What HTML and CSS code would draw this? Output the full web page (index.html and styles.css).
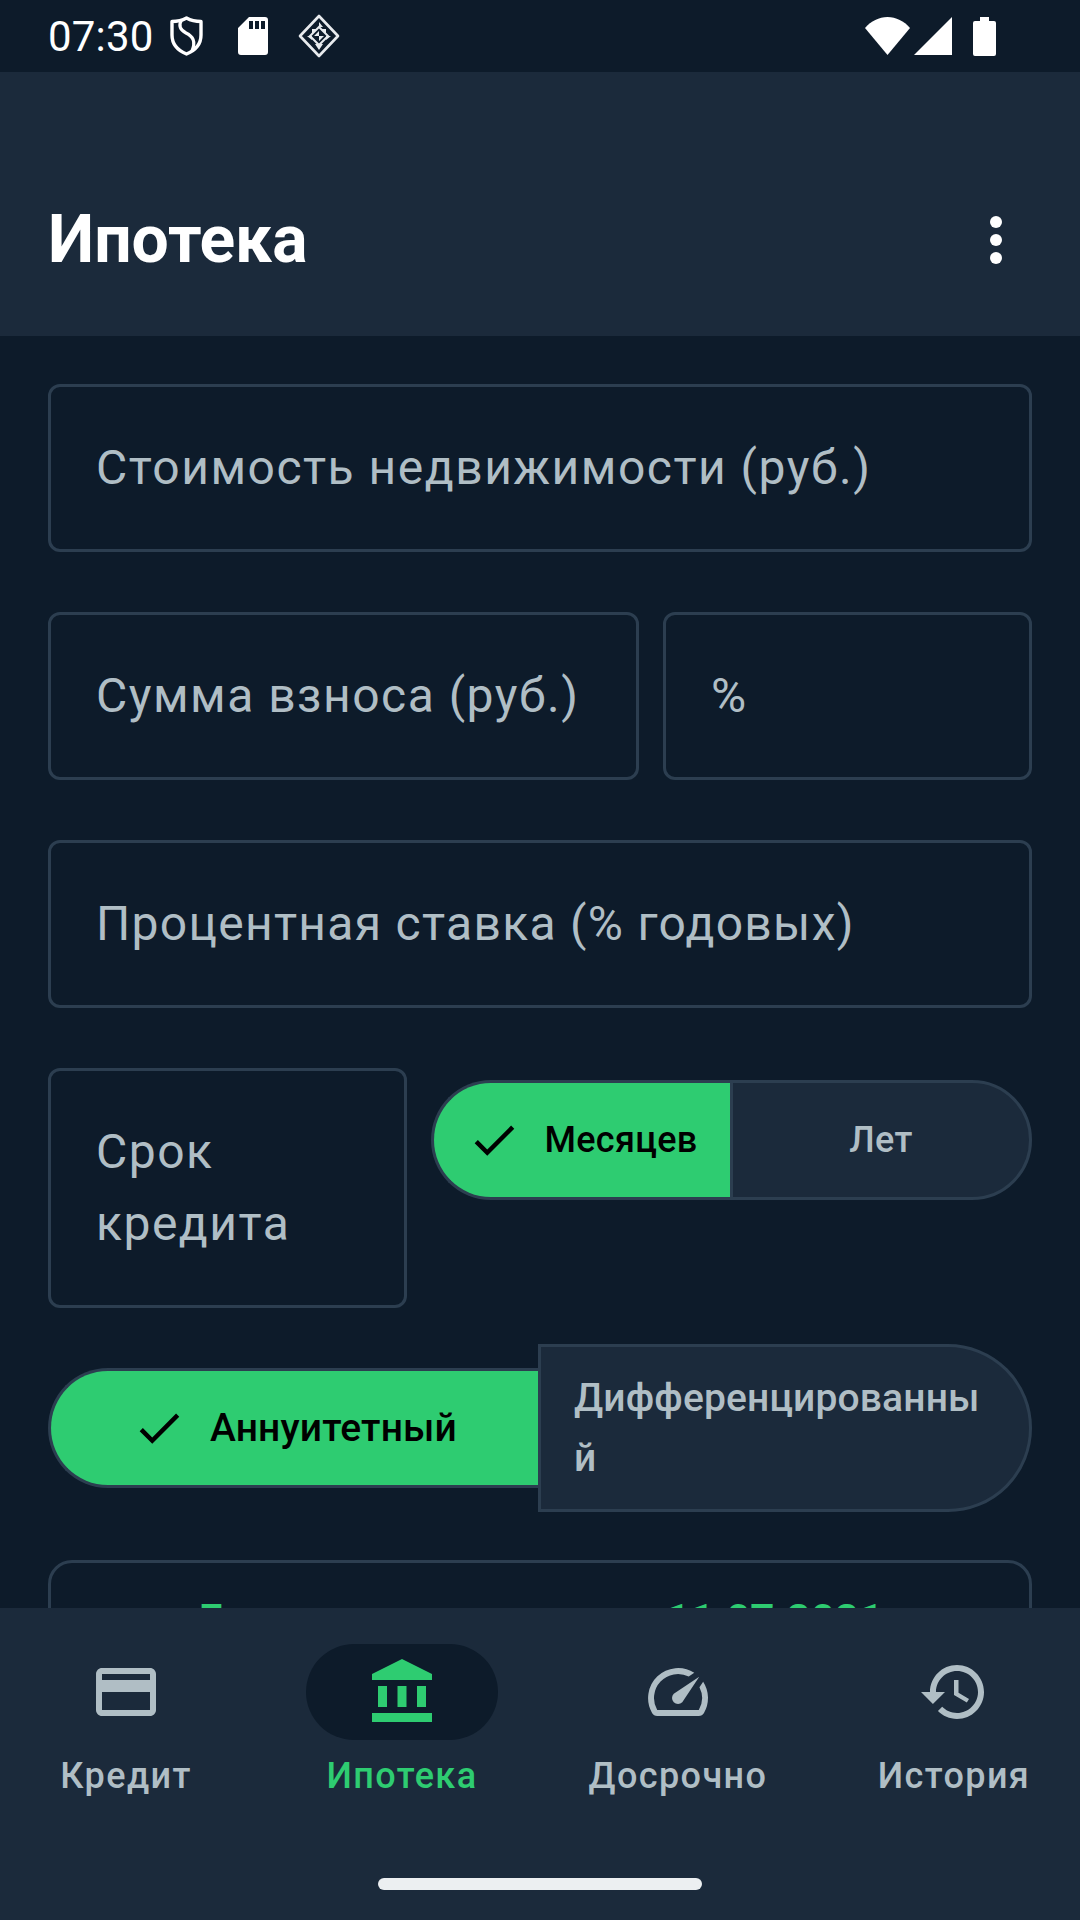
FILE: index.html
```html
<!DOCTYPE html>
<html>
<head>
    <meta charset="UTF-8">
    <meta name="viewport" content="width=device-width, initial-scale=1.0">
    <title>Ипотека</title>
    <link rel="stylesheet" href="styles.css">
</head>
<body>
    <!-- Status bar -->
    <div class="status-bar">
        <span class="clock">07:30</span>
        <svg class="ic-shield" width="33" height="40" viewBox="0 0 33 40">
            <path d="M16.5 2 C21 4.500 26 5.500 31 5.500 V19 C31 28 25 34.500 16.5 38 C8 34.500 2 28 2 19 V5.500 C7 5.500 12 4.500 16.500 2 Z" fill="none" stroke="#fff" stroke-width="3.400" stroke-linejoin="round"/>
            <path d="M11.500 4 C8 10 10.500 14 16 17 C23 20.500 26 25 22 35" fill="none" stroke="#fff" stroke-width="3.200"/>
        </svg>
        <svg class="ic-sd" width="30" height="38" viewBox="0 0 30 38">
            <path fill="#fff" d="M11 0 H27 A3 3 0 0 1 30 3 V35 A3 3 0 0 1 27 38 H3 A3 3 0 0 1 0 35 V11 Z M11 4 V12 H15 V4 Z M17 4 V12 H21 V4 Z M23 4 V12 H27 V4 Z" fill-rule="evenodd"/>
        </svg>
        <svg class="ic-diamond" width="42" height="44" viewBox="0 0 42 44">
            <path d="M21 2 L40 22 L21 42 L2 22 Z" fill="none" stroke="#e8ebee" stroke-width="2.600" stroke-linejoin="round"/>
            <path d="M21 13 L30 22 L21 31 L12 22 Z" fill="none" stroke="#e8ebee" stroke-width="2"/>
            <path fill="#e8ebee" d="M21 8 L25 13 H21 Z M14 15 H19 L14 20 Z M28 15 V20 L23 15 Z M9 22 H14 L14 26 Z M33 22 H28 V26 Z M21 22 H26 L21 27 Z M16 22 H21 V17 Z M17 30 H25 L21 36 Z"/>
        </svg>
        <span class="spacer"></span>
        <svg class="ic-wifi" width="45" height="38" viewBox="0 0 45 38">
            <path fill="#fff" d="M22.500 38 L0 11 C6 4 14 0 22.500 0 C31 0 39 4 45 11 Z"/>
        </svg>
        <svg class="ic-signal" width="38" height="38" viewBox="0 0 38 38">
            <path fill="#fff" d="M38 0 V38 H0 Z"/>
        </svg>
        <svg class="ic-battery" width="23" height="39" viewBox="0 0 23 39">
            <path fill="#fff" d="M7 0 H16 V4 H21 A2 2 0 0 1 23 6 V37 A2 2 0 0 1 21 39 H2 A2 2 0 0 1 0 37 V6 A2 2 0 0 1 2 4 H7 Z"/>
        </svg>
    </div>

    <!-- App bar -->
    <div class="app-bar">
        <h1>Ипотека</h1>
        <div class="more">
            <i></i><i></i><i></i>
        </div>
    </div>

    <!-- Form -->
    <div class="content">
        <div class="field">Стоимость недвижимости (руб.)</div>
        <div class="row">
            <div class="field grow">Сумма взноса (руб.)</div>
            <div class="field percent">%</div>
        </div>
        <div class="field tight">Процентная ставка (% годовых)</div>
        <div class="row top">
            <div class="field term">Срок кредита</div>
            <div class="toggle small">
                <div class="seg on">
                    <svg width="54" height="54" viewBox="0 0 24 24"><path d="M9 16.170 4.830 12l-1.420 1.410L9 19 21 7l-1.410-1.410z" fill="#000"/></svg>
                    <span>Месяцев</span>
                </div>
                <div class="seg off">Лет</div>
            </div>
        </div>
        <div class="toggle wide">
            <div class="seg on">
                <svg width="54" height="54" viewBox="0 0 24 24"><path d="M9 16.170 4.830 12l-1.420 1.410L9 19 21 7l-1.410-1.410z" fill="#000"/></svg>
                <span>Аннуитетный</span>
            </div>
            <div class="seg off">Дифференцированный</div>
        </div>
        <div class="card">
            <span>Гашение</span>
            <span>11.07.2021</span>
        </div>
    </div>

    <!-- Bottom navigation -->
    <div class="nav">
        <div class="nav-items">
            <div class="nav-item">
                <div class="nav-icon">
                    <svg width="72" height="72" viewBox="0 0 24 24"><path d="M20 4H4c-1.110 0-1.990.890-1.990 2L2 18c0 1.110.890 2 2 2h16c1.110 0 2-.890 2-2V6c0-1.110-.890-2-2-2zm0 14H4v-6h16v6zm0-10H4V6h16v2z"/></svg>
                </div>
                <span>Кредит</span>
            </div>
            <div class="nav-item active">
                <div class="nav-icon">
                    <svg width="72" height="72" viewBox="0 0 24 24"><path d="M4 10h3v7H4zm6.500 0h3v7h-3zM2 19h20v3H2zm15-9h3v7h-3zm-5-9L2 6v2h20V6z"/></svg>
                </div>
                <span>Ипотека</span>
            </div>
            <div class="nav-item">
                <div class="nav-icon">
                    <svg width="72" height="72" viewBox="0 0 24 24"><path d="M20.380 8.570l-1.230 1.850a8 8 0 0 1-.220 7.580H5.070A8 8 0 0 1 15.580 6.850l1.850-1.230A10 10 0 0 0 3.350 19a2 2 0 0 0 1.720 1h13.850a2 2 0 0 0 1.740-1 10 10 0 0 0-.270-10.440zm-9.790 6.840a2 2 0 0 0 2.830 0l5.660-8.490-8.490 5.660a2 2 0 0 0 0 2.830z"/></svg>
                </div>
                <span>Досрочно</span>
            </div>
            <div class="nav-item">
                <div class="nav-icon">
                    <svg width="72" height="72" viewBox="0 0 24 24"><path d="M13 3c-4.970 0-9 4.030-9 9H1l3.890 3.890.070.140L9 12H6c0-3.870 3.130-7 7-7s7 3.130 7 7-3.130 7-7 7c-1.930 0-3.680-.790-4.940-2.060l-1.420 1.420C8.270 19.990 10.510 21 13 21c4.970 0 9-4.030 9-9s-4.030-9-9-9zm-1 5v5l4.280 2.540.720-1.210-3.500-2.080V8H12z"/></svg>
                </div>
                <span>История</span>
            </div>
        </div>
        <div class="home-bar"></div>
    </div>
</body>
</html>
```

FILE: styles.css
```css
* {
    box-sizing: border-box;
}
html, body {
    margin: 0;
    padding: 0;
}
body {
    width: 1080px;
    height: 1920px;
    overflow: hidden;
    display: flex;
    flex-direction: column;
    background-color: #0d1b2a;
    font-family: Roboto, sans-serif;
    color: #b0bec5;
}

/* status bar */
.status-bar {
    height: 72px;
    flex: none;
    display: flex;
    align-items: center;
    padding: 0 84px 0 48px;
}
.clock {
    font-size: 42px;
    color: #fff;
    width: 122px;
    letter-spacing: 0.200px;
}
.ic-sd {
    margin-left: 35px;
}
.ic-diamond {
    margin-left: 30px;
}
.spacer {
    flex: 1;
}
.ic-signal {
    margin-left: 4px;
}
.ic-battery {
    margin-left: 21px;
}

/* app bar */
.app-bar {
    height: 264px;
    flex: none;
    display: flex;
    align-items: center;
    justify-content: space-between;
    padding: 126px 78px 54px 48px;
    background-color: #1b2a3b;
}
.app-bar h1 {
    margin: 0;
    font-size: 66px;
    line-height: 84px;
    font-weight: 700;
    color: #fff;
}
.more {
    display: flex;
    flex-direction: column;
    gap: 6px;
}
.more i {
    width: 12px;
    height: 12px;
    border-radius: 50%;
    background-color: #fff;
}

/* form */
.content {
    flex: 1;
    min-height: 0;
    overflow: hidden;
    display: flex;
    flex-direction: column;
    gap: 60px;
    padding: 48px 48px 0;
}
.field {
    flex: none;
    min-height: 168px;
    display: flex;
    align-items: center;
    padding: 0 45px;
    border: 3px solid #2c3e50;
    border-radius: 12px;
    font-size: 48px;
    line-height: 72px;
    letter-spacing: 1.5px;
}
.field.tight {
    letter-spacing: 1.300px;
}
.row {
    display: flex;
    gap: 24px;
    flex: none;
}
.row.top {
    align-items: flex-start;
}
.grow {
    flex: 1;
}
.percent {
    width: 369px;
}
.term {
    width: 359px;
    height: 240px;
}

/* toggles */
.toggle {
    flex: none;
    display: flex;
}
.toggle.small {
    flex: 1;
    margin-top: 12px;
}
.seg {
    display: flex;
    align-items: center;
    font-size: 36px;
    font-weight: 500;
    line-height: 60px;
    letter-spacing: 0.300px;
    border: 3px solid #2c3e50;
}
.seg.on {
    height: 120px;
    background-color: #2ecc71;
    color: #000;
    border-radius: 60px 0 0 60px;
    border-right: none;
    justify-content: center;
    gap: 24px;
}
.seg.off {
    background-color: #1b2a3b;
    color: #b0bec5;
    border-radius: 0 60px 60px 0;
}
.small .seg.on {
    width: 299px;
}
.small .seg.off {
    flex: 1;
    height: 120px;
    justify-content: center;
}
.wide {
    align-items: center;
    height: 168px;
    margin-top: -24px;
}
.wide .seg {
    font-size: 39px;
    letter-spacing: 0.150px;
}
.wide .seg.on {
    width: 490px;
}
.wide .seg.off {
    width: 494px;
    height: 168px;
    padding: 0 40px 0 33px;
    border-radius: 0 84px 84px 0;
    word-break: break-all;
}

/* result card, runs under the bottom navigation */
.card {
    flex: none;
    height: 200px;
    margin-top: -12px;
    display: flex;
    justify-content: space-between;
    padding: 27px 146px 0 148px;
    border: 3px solid #2c3e50;
    border-radius: 24px;
    font-size: 42px;
    line-height: 60px;
    font-weight: 700;
    color: #2ecc71;
}

/* bottom navigation */
.nav {
    height: 312px;
    flex: none;
    background-color: #1b2a3b;
    display: flex;
    flex-direction: column;
    align-items: center;
    overflow: hidden;
}
.nav-items {
    display: grid;
    grid-template-columns: repeat(4, 276px);
    justify-content: center;
    width: 100%;
    padding-top: 36px;
}
.nav-item {
    display: flex;
    flex-direction: column;
    align-items: center;
    gap: 12px;
    font-size: 36px;
    font-weight: 500;
    line-height: 48px;
    letter-spacing: 1.400px;
}
.nav-icon {
    width: 192px;
    height: 96px;
    display: flex;
    align-items: center;
    justify-content: center;
    border-radius: 48px;
}
.nav-icon svg {
    fill: #b0bec5;
}
.nav-item.active {
    color: #2ecc71;
}
.active .nav-icon {
    background-color: #0d1b2a;
}
.active .nav-icon svg {
    fill: #2ecc71;
}
.home-bar {
    width: 324px;
    height: 12px;
    margin-top: 78px;
    border-radius: 6px;
    background-color: #eceff1;
}
```
